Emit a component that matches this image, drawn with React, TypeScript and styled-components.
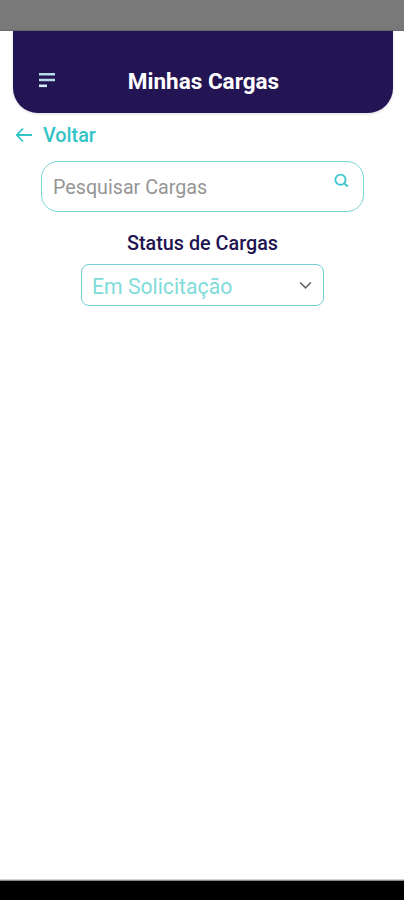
import React from 'react';
import styled, { createGlobalStyle } from 'styled-components';

const GlobalStyle = createGlobalStyle`
  *, *::before, *::after { box-sizing: border-box; }
  body { margin: 0; background: #fff; font-family: Roboto, sans-serif; }
`;

const Screen = styled.div`
  display: flex;
  flex-direction: column;
  height: 900px;
  background: #fff;
`;

const StatusBar = styled.div`
  height: 31px;
  flex: none;
  border-bottom: 1px solid #68676f;
  background: #797979;
`;

const Header = styled.header`
  display: grid;
  grid-template-columns: 56px 1fr 56px;
  align-items: center;
  flex: none;
  height: 82px;
  margin: 0 11.5px 0 12.5px;
  padding: 16px 0 0;
  border-radius: 0 0 25px 25px;
  background: #231553;
  box-shadow: 0 1px 3px rgba(35, 21, 83, 0.16);
`;

const MenuButton = styled.button`
  display: flex;
  width: 18px;
  height: 18px;
  margin: 0 0 0 25px;
  padding: 0;
  border: 0;
  background: none;
`;

const Title = styled.h1`
  margin: 0;
  padding: 2px 0 0 2px;
  color: #fff;
  font-size: 22.5px;
  font-weight: 700;
  line-height: 28px;
  text-align: center;
  white-space: nowrap;
`;

const BackLink = styled.a`
  display: flex;
  align-items: center;
  flex: none;
  gap: 10px;
  height: 24px;
  margin: 10px 0 0 15px;
  color: #32c3c7;
  font-size: 19.8px;
  font-weight: 500;
  line-height: 24px;
`;

const BackText = styled.span`
  padding-top: 2px;
`;

const SearchField = styled.div`
  display: flex;
  justify-content: space-between;
  flex: none;
  height: 51px;
  margin: 14px 40px 0 41px;
  padding: 0 14px 0 11px;
  border: 1.5px solid #78d5d8;
  border-radius: 17px;
`;

const Placeholder = styled.span`
  color: #959595;
  font-size: 19.7px;
  line-height: 51px;
`;

const SearchIcon = styled.svg`
  margin-top: 11px;
`;

const Label = styled.label`
  flex: none;
  margin-top: 20px;
  padding-left: 1px;
  color: #211451;
  font-size: 19.8px;
  font-weight: 500;
  line-height: 24px;
  text-align: center;
`;

const Select = styled.div`
  display: flex;
  align-items: center;
  justify-content: space-between;
  flex: none;
  height: 42px;
  margin: 8px 80px 0 81px;
  padding: 1px 11px 0 10px;
  border: 1.5px solid #70d0d4;
  border-radius: 8px;
  color: #80dcda;
  font-size: 21.2px;
`;

const SelectValue = styled.span`
  padding-top: 2px;
`;

const NavigationBar = styled.div`
  height: 21px;
  flex: none;
  margin-top: auto;
  border-top: 1px solid #d0d3d2;
  background: linear-gradient(#8a8a8a 0 1px, #000 1px);
`;

export default function App() {
  return (
    <>
      <GlobalStyle />
      <Screen>
        <StatusBar />
        <Header>
          <MenuButton aria-label="Menu">
            <svg width="18" height="18" viewBox="0 0 18 18" fill="none" strokeWidth="2.6">
              <path d="M1 3.2H17M1 9H17" stroke="#b5dce6" />
              <path d="M1 14.8H9" stroke="#d2edf5" />
            </svg>
          </MenuButton>
          <Title>Minhas Cargas</Title>
        </Header>
        <BackLink>
          <svg width="18" height="16" viewBox="0 0 18 16" fill="none" stroke="currentColor" strokeWidth="1.8">
            <path d="M17 8H2M8 1.5L1.8 8L8 14.5" />
          </svg>
          <BackText>Voltar</BackText>
        </BackLink>
        <SearchField>
          <Placeholder>Pesquisar Cargas</Placeholder>
          <SearchIcon width="15" height="15" viewBox="0 0 15 15" fill="none" stroke="#3fc8cb" strokeWidth="1.9">
            <circle cx="6.5" cy="6.7" r="5.1" />
            <path d="M10.2 10.3L13.8 13.5" />
          </SearchIcon>
        </SearchField>
        <Label>Status de Cargas</Label>
        <Select>
          <SelectValue>Em Solicitação</SelectValue>
          <svg width="13" height="9" viewBox="0 0 13 9" fill="none" stroke="#666" strokeWidth="1.6">
            <path d="M1.2 1.5L6.5 6.8L11.8 1.5" />
          </svg>
        </Select>
        <NavigationBar />
      </Screen>
    </>
  );
}
